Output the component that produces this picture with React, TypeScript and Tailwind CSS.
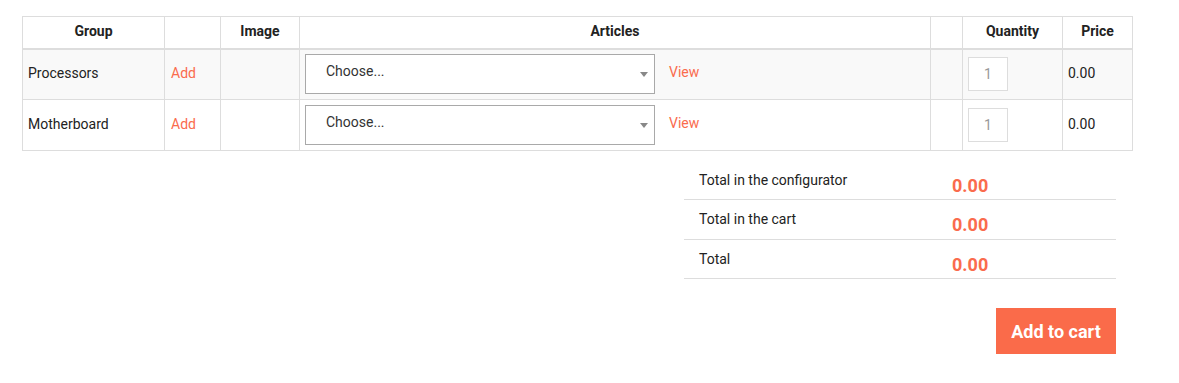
const rows = [
  { group: 'Processors', shaded: true },
  { group: 'Motherboard', shaded: false },
];

const totals = ['Total in the configurator', 'Total in the cart', 'Total'];

function Select() {
  return (
    <div className="relative flex h-[40px] w-[350px] items-center border border-[#a9a9a9] bg-white pb-[5px] pl-[20px] text-[14px] text-[#333]">
      Choose...
      <span className="absolute right-[6px] top-[17px] h-0 w-0 border-x-[4px] border-t-[5px] border-x-transparent border-t-[#888]" />
    </div>
  );
}

export default function App() {
  return (
    <div className="min-h-[383px] w-[1179px] bg-white pl-[22px] pt-[16px] text-[#222]" style={{ fontFamily: 'Roboto, "Liberation Sans", sans-serif' }}>
      <table className="w-[1110px] table-fixed border-collapse text-[14px]">
        <colgroup>
          <col className="w-[142px]" />
          <col className="w-[56px]" />
          <col className="w-[79px]" />
          <col className="w-[631px]" />
          <col className="w-[32px]" />
          <col className="w-[100px]" />
          <col className="w-[70px]" />
        </colgroup>
        <thead>
          <tr className="h-[32px] border-b-2 border-[#ddd] font-bold">
            <th className="border border-[#ddd] pb-[2px] text-center">Group</th>
            <th className="border border-[#ddd]"></th>
            <th className="border border-[#ddd] pb-[2px] text-center">Image</th>
            <th className="border border-[#ddd] pb-[2px] text-center">Articles</th>
            <th className="border border-[#ddd]"></th>
            <th className="border border-[#ddd] pb-[2px] text-center">Quantity</th>
            <th className="border border-[#ddd] pb-[2px] text-center">Price</th>
          </tr>
        </thead>
        <tbody>
          {rows.map((r) => (
            <tr key={r.group} className={`h-[51px] ${r.shaded ? 'bg-[#f9f9f9]' : 'bg-white'}`}>
              <td className="border border-[#ddd] px-[5px] pb-[2px]">{r.group}</td>
              <td className="border border-[#ddd] px-[6px] pb-[2px] text-[#fa6b4d]">Add</td>
              <td className="border border-[#ddd]"></td>
              <td className="border border-[#ddd] px-[5px]">
                <div className="flex items-center gap-[14px]">
                  <Select />
                  <span className="-mt-[3px] text-[#fa6b4d]">View</span>
                </div>
              </td>
              <td className="border border-[#ddd]"></td>
              <td className="border border-[#ddd] px-[5px]">
                <div className="flex h-[34px] w-[40px] items-center justify-center border border-[#ddd] bg-white text-[#999]">1</div>
              </td>
              <td className="border border-[#ddd] px-[5px] pb-[2px]">0.00</td>
            </tr>
          ))}
        </tbody>
      </table>

      <div className="ml-[662px] mt-[14px] w-[432px]">
        {totals.map((t, i) => (
          <div key={t} className={`flex border-b border-[#ddd] pl-[15px] ${i === 0 ? 'h-[35px]' : i === 1 ? 'h-[40px]' : 'h-[39px]'}`}>
            <div className={`w-[253px] text-[14px] ${i === 0 ? 'pt-[5px]' : 'pt-[9px]'}`}>{t}</div>
            <div className={`text-[18px] font-bold text-[#fa6b4d] ${i === 0 ? 'pt-[7px]' : 'pt-[11px]'}`}>0.00</div>
          </div>
        ))}
        <div className="mt-[29px] flex justify-end">
          <button className="h-[46px] w-[120px] bg-[#fa6b4a] text-[18px] font-bold text-white">Add to cart</button>
        </div>
      </div>
    </div>
  );
}
